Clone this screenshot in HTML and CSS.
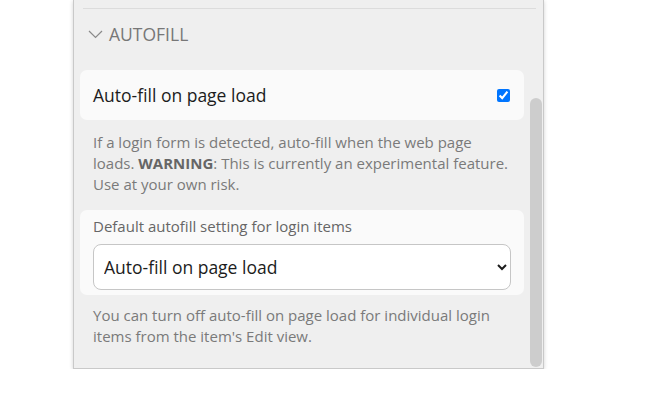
FILE: index.html
```html
<!DOCTYPE html>
<html>
<head>
<meta charset="utf-8">
<link rel="stylesheet" href="styles.css">
</head>
<body>
<div class="panel">
  <div class="content">
    <div class="sep"></div>
    <div class="section-head">
      <svg class="chev" width="15" height="9" viewBox="0 0 15 9"><path d="M1 1 L7.5 7.5 L14 1" fill="none" stroke="#8a8a8a" stroke-width="1.2"/></svg>
      <span>AUTOFILL</span>
    </div>
    <div class="card row">
      <label class="row-label" for="cb">Auto-fill on page load</label>
      <input id="cb" type="checkbox" checked>
    </div>
    <p class="help first">If a login form is detected, auto-fill when the web page loads. <b>WARNING</b>: This is currently an experimental feature. Use at your own risk.</p>
    <div class="card field">
      <label class="field-label" for="sel">Default autofill setting for login items</label>
      <select id="sel"><option>Auto-fill on page load</option></select>
    </div>
    <p class="help last">You can turn off auto-fill on page load for individual login items from the item's Edit view.</p>
  </div>
  <div class="thumb"></div>
</div>
</body>
</html>
```
FILE: styles.css
```css
html, body { margin: 0; padding: 0; background: #fff; }
body { font-family: "Open Sans", "Liberation Sans", sans-serif; }
.panel {
  position: relative;
  margin-left: 73px;
  width: 469px;
  height: 368px;
  background: #efefef;
  border: 1px solid #c9c9c9;
  border-top: none;
  box-shadow: 0 1px 4px rgba(0,0,0,0.18);
  overflow: hidden;
}
.content {
  padding: 8px 19px 0 6px;
}
.sep {
  height: 1px;
  background: #dcdcdc;
  margin-left: 3px;
  margin-right: -12px;
}
.section-head {
  display: flex;
  align-items: center;
  gap: 6px;
  height: 50px;
  padding-left: 8px;
  margin-bottom: 11px;
  color: #777;
  font-size: 17.5px;
}
.section-head span { line-height: 22px; }
.chev { margin-top: 1px; }
.card {
  background: #fafafa;
  border-radius: 7px;
}
.row {
  display: flex;
  align-items: center;
  justify-content: space-between;
  height: 50px;
  padding: 0 14px 0 13px;
}
.row-label { font-size: 17.5px; color: #1c1c1c; }
.row input { margin: 0; width: 13px; height: 13px; }
.help {
  margin: 0;
  padding: 12px 13px 15px;
  font-size: 15px;
  line-height: 21px;
  color: #7a7a7a;
}
.help.first { padding-bottom: 15px; }
.help.last { padding-top: 10px; }
.help b { color: #666; }
.field {
  padding: 6px 13px 5px;
}
.field-label {
  display: block;
  font-size: 15px;
  line-height: 20px;
  color: #666;
  margin-bottom: 8px;
}
.field select {
  display: block;
  width: 100%;
  height: 46px;
  font-family: inherit;
  font-size: 17.5px;
  color: #1c1c1c;
  background: #fff;
  border: 1px solid #c6c6c6;
  border-radius: 8px;
  padding: 0 6px;
}
.thumb {
  position: absolute;
  left: 456px;
  top: 98px;
  width: 12px;
  height: 269px;
  background: #cdcdcd;
  border-radius: 6px;
}
```
